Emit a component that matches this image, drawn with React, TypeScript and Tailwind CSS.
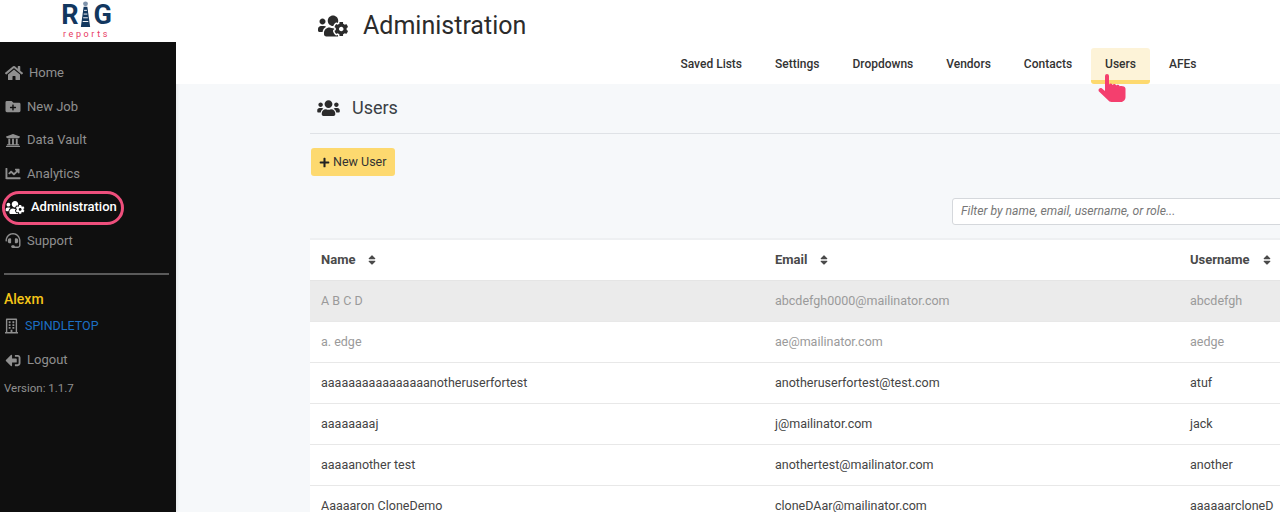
import { FaHome, FaFolderPlus, FaUniversity, FaChartLine, FaUsersCog, FaHeadset, FaRegBuilding, FaSignOutAlt, FaUsers, FaPlus, FaSort } from 'react-icons/fa';

const navItems = [
  { label: 'Home', icon: FaHome, h: 'h-[34px]', iconClass: 'h-[16px] w-[18px]' },
  { label: 'New Job', icon: FaFolderPlus, h: 'h-[33px]', iconClass: 'h-[15px] w-[16px]' },
  { label: 'Data Vault', icon: FaUniversity, h: 'h-[34px]', iconClass: 'h-[15px] w-[16px]' },
  { label: 'Analytics', icon: FaChartLine, h: 'h-[33px]', iconClass: 'h-[15px] w-[16px]' },
  { label: 'Administration', icon: FaUsersCog, h: 'h-[34px]', iconClass: 'h-[15px] w-[20px]', active: true },
  { label: 'Support', icon: FaHeadset, h: 'h-[33px]', iconClass: 'h-[15px] w-[16px]' },
];

const tabs = ['Saved Lists', 'Settings', 'Dropdowns', 'Vendors', 'Contacts', 'Users', 'AFEs'];

const users = [
  { name: 'A B C D', email: 'abcdefgh0000@mailinator.com', username: 'abcdefgh', muted: true, bg: 'bg-[#ebebeb]' },
  { name: 'a. edge', email: 'ae@mailinator.com', username: 'aedge', muted: true, bg: 'bg-white' },
  { name: 'aaaaaaaaaaaaaaaanotheruserfortest', email: 'anotheruserfortest@test.com', username: 'atuf', bg: 'bg-white' },
  { name: 'aaaaaaaaj', email: 'j@mailinator.com', username: 'jack', bg: 'bg-white' },
  { name: 'aaaaanother test', email: 'anothertest@mailinator.com', username: 'another', bg: 'bg-white' },
  { name: 'Aaaaaron CloneDemo', email: 'cloneDAar@mailinator.com', username: 'aaaaaarcloneD', bg: 'bg-white' },
];

const Logo = () => (
  <div className="flex h-[42px] flex-col items-center bg-white pr-[3px]">
    <div className="flex h-[29px] items-end justify-center text-[27px] leading-[28px] font-bold text-[#12375f]">
      <span>R</span>
      <svg viewBox="0 0 14 30" className="mx-[1px] h-[28px] w-[13px]">
        <circle cx="7" cy="3" r="2.6" fill="#7f93ab" />
        <path d="M5 6h4l3 22H2z" fill="#12375f" />
        <path d="M5.5 10h3M5 14h4M4.5 18h5M4 22h6" stroke="#ffffff" strokeWidth="1" />
      </svg>
      <span>G</span>
    </div>
    <div className="mt-[1px] text-[9px] leading-[9px] tracking-[2.6px] text-[#e8385f]">reports</div>
  </div>
);

const Sidebar = () => (
  <aside className="flex w-[176px] shrink-0 flex-col bg-[#0f0f0f] shadow-[2px_0_3px_rgba(0,0,0,0.06)]">
    <Logo />
    <nav className="flex flex-col pt-[14px]">
      {navItems.map(({ label, icon: Icon, h, iconClass, active }) => (
        <div key={label} className={`relative flex ${h} items-center pl-[5px] text-[13px] ${active ? 'font-medium text-white' : 'text-[#8f8f8f]'}`}>
          <Icon className={`mr-[6px] ${iconClass}`} />
          <span>{label}</span>
          {active && <span className="absolute top-[1px] left-[2px] h-[34px] w-[122px] rounded-full border-[3px] border-[#ee4f7c]" />}
        </div>
      ))}
    </nav>
    <div className="mx-[4px] mt-[16px] h-[2px] w-[165px] bg-[#5a5a5a]" />
    <div className="mt-[16px] pl-[4px] text-[14px] leading-[17px] font-medium text-[#f5c518]">Alexm</div>
    <div className="mt-[10px] flex items-center pl-[5px] text-[12.5px] leading-[16px] text-[#1c6fc4]">
      <FaRegBuilding className="mr-[7px] h-[16px] w-[13px] text-[#8f8f8f]" />
      <span>SPINDLETOP</span>
    </div>
    <div className="mt-[18px] flex items-center pl-[5px] text-[13px] leading-[16px] text-[#8f8f8f]">
      <FaSignOutAlt className="mr-[6px] h-[15px] w-[16px] rotate-180" />
      <span>Logout</span>
    </div>
    <div className="mt-[13px] pl-[4px] text-[11.5px] leading-[14px] text-[#8f8f8f]">Version: 1.1.7</div>
  </aside>
);

const PointerHand = () => (
  <svg viewBox="0 0 28 30" className="absolute top-[25px] left-[7px] h-[30px] w-[28px] text-[#f43f6e]">
    <path
      d="M7 3a2 2 0 0 1 4 0v8.5a2 2 0 0 1 3.6.4 2 2 0 0 1 3.6.5 2 2 0 0 1 3.4.8c2-.6 5.4-.2 5.9 2.3v8.5c0 2.6-2 5-4.5 5H13.5c-1.6 0-2.6-.8-3.6-2L1 18.500c-1.500-2 1-4.500 3-3l3 2.500z"
      fill="currentColor"
    />
  </svg>
);

const Header = () => (
  <header className="flex h-[84px] flex-col bg-white pl-[141px]">
    <div className="flex h-[51px] items-center pt-[1px]">
      <FaUsersCog className="h-[24px] w-[32px] text-[#2b2b2b]" />
      <h1 className="ml-[14px] text-[25px] leading-[30px] text-[#2b2b2b]">Administration</h1>
    </div>
    <div className="flex justify-end pr-[67px] text-[12px] font-medium text-[#333333]">
      {tabs.map((tab) => (
        <div key={tab} className={`mx-[2.5px] -mt-[3px] flex h-[36px] items-center rounded-[3px] px-[14px] ${tab === 'Users' ? 'relative border-b-[4px] border-[#fdd96f] bg-[#fdf3d8]' : 'pb-[4px]'}`}>
          {tab}
          {tab === 'Users' && <PointerHand />}
        </div>
      ))}
    </div>
  </header>
);

const SortHead = ({ label }: { label: string }) => (
  <div className="flex items-center px-[11px] text-[13px] font-bold text-[#4a4a4a]">
    {label}
    <FaSort className="ml-[12px] h-[12px] w-[10px]" />
  </div>
);

const Content = () => (
  <div className="flex-1 pl-[134px]">
    <div className="flex h-[50px] items-center border-b border-[#dfe2e6] pb-[2px]">
      <FaUsers className="ml-[7px] h-[18px] w-[23px] text-[#2b2b2b]" />
      <h2 className="ml-[12px] text-[18px] leading-[20px] text-[#3a3f45]">Users</h2>
    </div>
    <button className="mt-[14px] ml-[1px] flex h-[28px] items-center rounded-[3px] bg-[#fdd96f] pl-[8px] pr-[9px] text-[12.5px] text-[#333333]">
      <FaPlus className="mr-[3px] h-[11px] w-[11px] text-[#222222]" />
      New User
    </button>
    <div className="mt-[22px] flex justify-end">
      <div className="-mr-[12px] flex h-[27px] w-[340px] items-center rounded-[3px] border border-[#d5d8dc] bg-white pl-[8px] text-[12.2px] text-[#777777] italic">
        Filter by name, email, username, or role...
      </div>
    </div>
    <div className="mt-[13px] w-[1000px] border-t-2 border-[#eef0f2] bg-white">
      <div className="grid h-[41px] grid-cols-[454px_415px_131px] border-b border-[#e5e5e5]">
        <SortHead label="Name" />
        <SortHead label="Email" />
        <SortHead label="Username" />
      </div>
      {users.map((user) => (
        <div key={user.email} className={`grid h-[41px] grid-cols-[454px_415px_131px] items-center border-b border-[#e8e8e8] text-[12.5px] ${user.bg} ${user.muted ? 'text-[#9a9a9a]' : 'text-[#444444]'}`}>
          <div className="px-[11px]">{user.name}</div>
          <div className="px-[11px]">{user.email}</div>
          <div className="px-[11px]">{user.username}</div>
        </div>
      ))}
    </div>
  </div>
);

export default function App() {
  return (
    <div className="flex h-[512px] w-[1280px] overflow-hidden bg-[#f6f8fa] font-['Roboto',sans-serif]">
      <Sidebar />
      <main className="flex min-w-0 flex-1 flex-col">
        <Header />
        <Content />
      </main>
    </div>
  );
}
